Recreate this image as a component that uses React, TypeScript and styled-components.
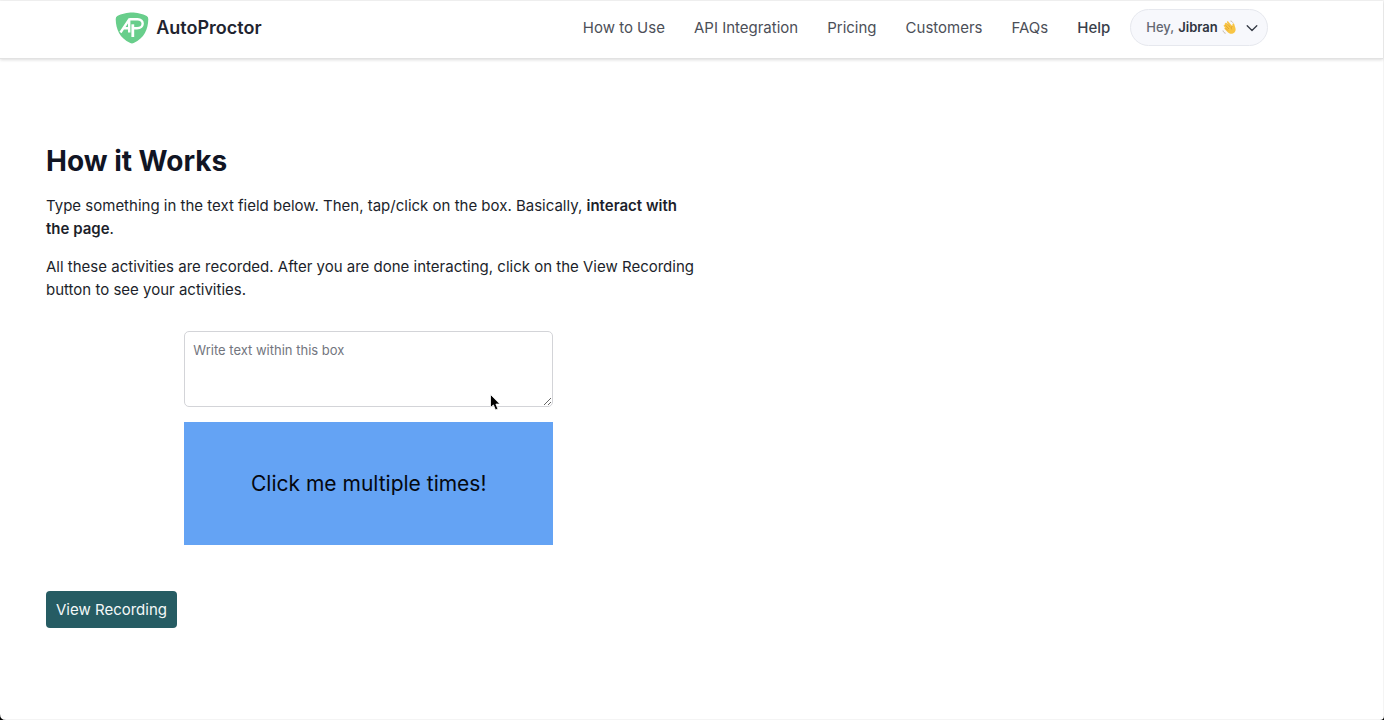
import React from 'react';
import styled, { createGlobalStyle } from 'styled-components';

const GlobalStyle = createGlobalStyle`
  *, *::before, *::after { box-sizing: border-box; }
  body {
    margin: 0;
    background: #ffffff;
    color: #1c1f2b;
    font-family: Inter, "Liberation Sans", sans-serif;
    font-size: 15px;
    line-height: 23px;
  }
  button, textarea { font: inherit; }
`;

const Page = styled.div`
  position: relative;
  display: flex;
  flex-direction: column;
  min-height: 100vh;
  border: 1px solid #f4f4f4;
  border-left: 0;
`;

const Header = styled.header`
  border-bottom: 1px solid #e2e2e2;
  box-shadow: 0 1px 3px rgba(0, 0, 0, 0.14);
`;

const HeaderInner = styled.div`
  display: flex;
  align-items: center;
  justify-content: space-between;
  width: calc(100% * 5 / 6);
  margin: 0 auto;
  padding: 8px 0 12px;
`;

const Brand = styled.a`
  display: flex;
  align-items: center;
  gap: 7px;
  color: #1f2430;
  font-size: 18px;
  font-weight: 600;
  text-decoration: none;
`;

const Nav = styled.nav`
  display: flex;
  align-items: center;
  gap: 29px;
`;

const NavLink = styled.a<{ $strong?: boolean }>`
  color: ${(p) => (p.$strong ? '#3a3f4b' : '#4c4f58')};
  font-weight: ${(p) => (p.$strong ? 500 : 400)};
  text-decoration: none;
`;

const Account = styled.div`
  display: flex;
  align-items: center;
  gap: 20px;
`;

const UserButton = styled.button`
  display: flex;
  align-items: center;
  height: 37px;
  padding: 0 9px 0 15px;
  border: 1px solid #e6e8ee;
  border-radius: 19px;
  background: #f7f8fc;
  color: #646873;
  font-size: 13px;
  font-weight: 500;
  cursor: pointer;

  strong {
    margin: 0 4px;
    color: #2f3440;
    font-weight: 600;
  }
  svg + svg { margin-left: 9px; }
`;

const Main = styled.main`
  width: 50%;
  padding: 84px 0 46px 46px;
`;

const Title = styled.h1`
  margin: 0 0 14px;
  color: #111524;
  font-size: 28px;
  font-weight: 700;
  line-height: 37px;
`;

const Paragraph = styled.p`
  margin: 0 -8px 15px 0;

  strong { font-weight: 600; }
`;

const Playground = styled.section`
  display: flex;
  flex-direction: column;
  gap: 15px;
  width: calc(100% * 4 / 7);
  margin: 30px auto 46px;
`;

const TextBox = styled.textarea`
  display: block;
  width: 100%;
  height: 76px;
  padding: 7px 8px;
  border: 1px solid #d3d4d8;
  border-radius: 5px;
  background: #ffffff;
  color: #1c1f2b;
  font-size: 13px;
  resize: vertical;

  &::placeholder { color: #72757e; opacity: 1; }
`;

const ClickBox = styled.button`
  height: 123px;
  border: 0;
  background: #64a3f4;
  color: #05080f;
  font-size: 21px;
  cursor: pointer;
`;

const RecordingButton = styled.button`
  height: 37px;
  padding: 0 10px;
  border: 0;
  border-radius: 4px;
  background: #265c63;
  color: #f4f8f8;
  cursor: pointer;
`;

const Pointer = styled.svg`
  position: absolute;
  left: 489px;
  top: 392px;
  pointer-events: none;
`;

const Corner = styled.svg<{ $side: 'left' | 'right' }>`
  position: absolute;
  bottom: -1px;
  ${(p) => (p.$side === 'left' ? 'left: 0;' : 'right: -1px; transform: scaleX(-1);')}
`;

const Shield = () => (
  <svg width="34" height="32" viewBox="0 0 34 32" aria-hidden="true">
    <path
      d="M17 .5C13 .5 6 2 2.3 4Q.6 5 .7 7.2C1 17 4.500 26 15.300 31Q17 31.800 18.700 31C29.500 26 33 17 33.300 7.200Q33.400 5 31.700 4C28 2 21 .5 17 .5Z"
      fill="#68ce8b"
    />
    <g fill="none" stroke="#fff" strokeWidth="2.400" strokeLinejoin="round">
      <path d="M5.500 20.500 14.200 7.300V20.500M8.800 16.300H14.500" />
      <path d="M17.800 25V12.300" strokeWidth="2.800" />
      <path d="M15 7.300H22.500C29.500 7.300 29.500 16.300 22 16.300H18" />
    </g>
  </svg>
);

const Wave = () => (
  <svg width="15" height="15" viewBox="0 0 15 15" aria-hidden="true">
    <path
      d="M3.200 3.200C3.900 2.500 4.500 2.900 5 3.500L7 5.700 5 2.600C4.500 1.700 5.700.9 6.400 1.700L9.500 5.300 10.300 6C10.500 4.700 10.200 3.500 11.300 3.200 12.500 3 12.500 5.500 13.200 7.300 14.300 10 13.400 12.500 11 13.500 8.700 14.400 7 13.500 5.500 12L2.600 9C1.900 8.200 2.700 7.400 3.500 8L1.900 6.200C1.300 5.400 2.200 4.600 3 5.300L2.900 5C2.300 4.400 2.600 3.700 3.200 3.200Z"
      fill="#f8c544"
    />
    <path d="M3.500 5.300 7 9M5 3.500 8.500 7.400M3.500 8 6 10.500M10.300 6C9.200 7.200 9.200 8.300 9.700 9.400" fill="none" stroke="#d99a2b" strokeWidth=".7" />
    <path d="M8.500 1C9.800 1.200 10.500 2 10.800 2.800M1 10.500C1.300 12 2.300 13 3.600 13.300" fill="none" stroke="#b8a48f" strokeWidth=".8" />
  </svg>
);

const Chevron = () => (
  <svg width="12" height="12" viewBox="0 0 12 12" aria-hidden="true">
    <path d="M1.200 3.800 6 8.500 10.800 3.800" fill="none" stroke="#343944" strokeWidth="1.300" strokeLinecap="round" strokeLinejoin="round" />
  </svg>
);

const links = ['How to Use', 'API Integration', 'Pricing', 'Customers', 'FAQs'];

export default function App() {
  return (
    <Page>
      <GlobalStyle />
      <Header>
        <HeaderInner>
          <Brand href="#">
            <Shield />
            AutoProctor
          </Brand>
          <Nav>
            {links.map((label) => (
              <NavLink key={label} href="#">{label}</NavLink>
            ))}
            <Account>
              <NavLink href="#" $strong>Help</NavLink>
              <UserButton type="button">
                Hey,<strong>Jibran</strong>
                <Wave />
                <Chevron />
              </UserButton>
            </Account>
          </Nav>
        </HeaderInner>
      </Header>
      <Main>
        <Title>How it Works</Title>
        <Paragraph>
          Type something in the text field below. Then, tap/click on the box. Basically,{' '}
          <strong>interact with the page</strong>.
        </Paragraph>
        <Paragraph>
          All these activities are recorded. After you are done interacting, click on the View
          Recording button to see your activities.
        </Paragraph>
        <Playground>
          <TextBox aria-label="Write text within this box" placeholder="Write text within this box" />
          <ClickBox type="button">Click me multiple times!</ClickBox>
        </Playground>
        <RecordingButton type="button">View Recording</RecordingButton>
      </Main>
      <Pointer width="12" height="19" viewBox="0 0 12 19" aria-hidden="true">
        <path d="M1.500 1.500V14.500L4.400 11.900 6.500 16.900 8.900 15.900 6.900 11.100H10.900Z" fill="#000" stroke="#fff" strokeWidth=".8" />
      </Pointer>
      <Corner $side="left" width="6" height="6" viewBox="0 0 6 6" aria-hidden="true">
        <path d="M0 0Q0 6 6 6H0Z" fill="#000" />
      </Corner>
      <Corner $side="right" width="4" height="4" viewBox="0 0 6 6" aria-hidden="true">
        <path d="M0 0Q0 6 6 6H0Z" fill="#000" />
      </Corner>
    </Page>
  );
}
